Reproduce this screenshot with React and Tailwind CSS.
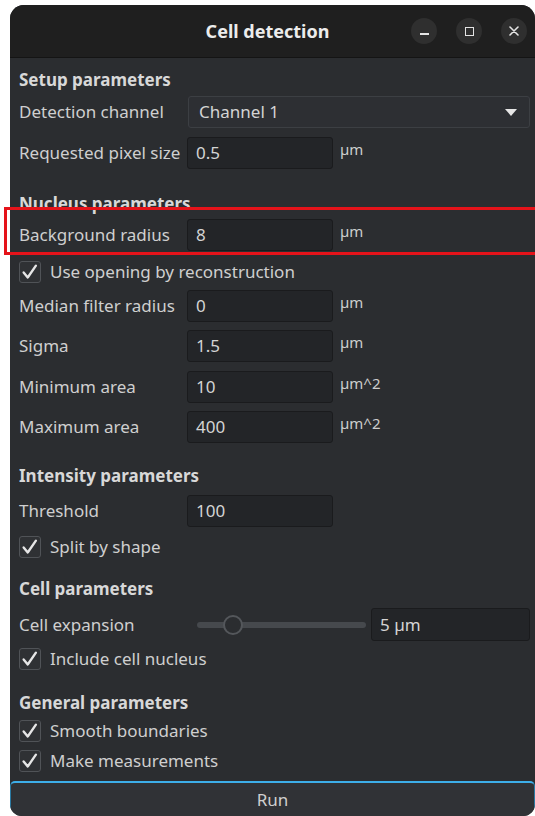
import React from 'react';

const Check = () => (
  <svg viewBox="0 0 22 22" className="w-[20px] h-[20px]">
    <path d="M4 11.5 L8.5 17 L17.5 4" fill="none" stroke="#e6e6e6" strokeWidth="2.6" strokeLinecap="round" strokeLinejoin="round" />
  </svg>
);

const Heading = ({ children, mt }) => (
  <div className={`h-[24px] flex items-center text-[17px] font-bold text-[#d8d8d8] ${mt}`}>{children}</div>
);

const Field = ({ label, value, unit, mt }) => (
  <div className={`h-[32px] flex items-center ${mt}`}>
    <span className="w-[168px] text-[17px] text-[#cfcfcf] whitespace-nowrap">{label}</span>
    <div className="w-[146px] h-[32px] flex items-center px-[8px] rounded-[3px] bg-[#232528] border border-[#1a1b1d] text-[17px] text-[#d4d4d4]">
      {value}
    </div>
    {unit && <span className="self-start pt-[2px] ml-[7px] text-[15px] leading-[20px] text-[#cdcdcd]">{unit}</span>}
  </div>
);

const CheckRow = ({ label, mt }) => (
  <div className={`h-[24px] flex items-center ${mt}`}>
    <div className="w-[22px] h-[22px] rounded-[3px] border border-[#505357] bg-[#2f3134] flex items-center justify-center">
      <Check />
    </div>
    <span className="ml-[9px] text-[17px] text-[#cfcfcf]">{label}</span>
  </div>
);

export default function App() {
  return (
    <div className="relative w-[535px] h-[816px] bg-white overflow-hidden pt-[5px] pl-[10px] font-['Noto_Sans',sans-serif]">
      <div className="w-[525px] h-[811px] rounded-t-[14px] rounded-b-[12px] bg-[#2b2d30] flex flex-col overflow-hidden">
        {/* header bar */}
        <div className="h-[53px] shrink-0 grid grid-cols-[1fr_auto_1fr] items-center bg-[#1f1f1f] border-b border-[#141414]">
          <div />
          <div className="-translate-x-[5px] text-[18px] font-bold text-[#ececec]">Cell detection</div>
          <div className="flex justify-end gap-[19px] pr-[8px]">
            <button className="w-[26px] h-[26px] rounded-full bg-[#2f2f2f] flex items-center justify-center">
              <span className="block w-[9px] h-[2px] bg-[#e4e4e4] translate-y-[3px]" />
            </button>
            <button className="w-[26px] h-[26px] rounded-full bg-[#2f2f2f] flex items-center justify-center">
              <span className="block w-[9px] h-[9px] border-[1.5px] border-[#e4e4e4]" />
            </button>
            <button className="w-[26px] h-[26px] rounded-full bg-[#2f2f2f] flex items-center justify-center">
              <svg viewBox="0 0 10 10" className="w-[10px] h-[10px]">
                <path d="M1 1 L9 9 M9 1 L1 9" stroke="#e4e4e4" strokeWidth="1.6" strokeLinecap="round" />
              </svg>
            </button>
          </div>
        </div>

        {/* parameters */}
        <div className="flex-1 flex flex-col pl-[9px] pr-[5px]">
          <Heading mt="mt-[10px]">Setup parameters</Heading>
          <div className="h-[32px] flex items-center mt-[4px]">
            <span className="w-[169px] text-[17px] text-[#cfcfcf]">Detection channel</span>
            <div className="flex-1 h-[32px] flex items-center justify-between pl-[10px] pr-[12px] rounded-[3px] bg-[#2d2f33] border border-[#3c3f43] text-[17px] text-[#d4d4d4]">
              <span>Channel 1</span>
              <svg viewBox="0 0 12 7" className="w-[12px] h-[7px]">
                <path d="M0 0 L12 0 L6 7 Z" fill="#e6e6e6" />
              </svg>
            </div>
          </div>
          <Field label="Requested pixel size" value="0.5" unit="µm" mt="mt-[9px]" />

          <Heading mt="mt-[23px]">Nucleus parameters</Heading>
          <Field label="Background radius" value="8" unit="µm" mt="mt-[3px]" />
          <CheckRow label="Use opening by reconstruction" mt="mt-[9px]" />
          <Field label="Median filter radius" value="0" unit="µm" mt="mt-[6px]" />
          <Field label="Sigma" value="1.5" unit="µm" mt="mt-[8px]" />
          <Field label="Minimum area" value="10" unit="µm^2" mt="mt-[9px]" />
          <Field label="Maximum area" value="400" unit="µm^2" mt="mt-[8px]" />

          <Heading mt="mt-[21px]">Intensity parameters</Heading>
          <Field label="Threshold" value="100" mt="mt-[7px]" />
          <CheckRow label="Split by shape" mt="mt-[8px]" />

          <Heading mt="mt-[18px]">Cell parameters</Heading>
          <div className="h-[33px] flex items-center mt-[7px]">
            <span className="w-[168px] text-[17px] text-[#cfcfcf]">Cell expansion</span>
            <div className="w-[184px] pl-[10px] pr-[5px]">
              <div className="relative h-[6px] rounded-full bg-[#46494d]">
                <span className="absolute left-[26px] top-[-7px] w-[20px] h-[20px] rounded-full bg-[#2b2d30] border-2 border-[#54575b]" />
              </div>
            </div>
            <div className="w-[159px] h-[33px] flex items-center px-[8px] rounded-[3px] bg-[#232528] border border-[#1a1b1d] text-[17px] text-[#d4d4d4]">
              5 µm
            </div>
          </div>
          <CheckRow label="Include cell nucleus" mt="mt-[6px]" />

          <Heading mt="mt-[20px]">General parameters</Heading>
          <CheckRow label="Smooth boundaries" mt="mt-[4px]" />
          <CheckRow label="Make measurements" mt="mt-[6px]" />
        </div>

        <button className="h-[35px] shrink-0 rounded-t-[5px] bg-[#303236] border-t-2 border-x border-t-[#3daee9] border-x-[#2a7aa3] text-[17px] text-[#cfcfcf]">
          Run
        </button>
      </div>

      {/* highlight frame */}
      <div className="absolute left-[4px] top-[207px] w-[540px] h-[48px] border-[3px] border-[#e5131a]" />
    </div>
  );
}
